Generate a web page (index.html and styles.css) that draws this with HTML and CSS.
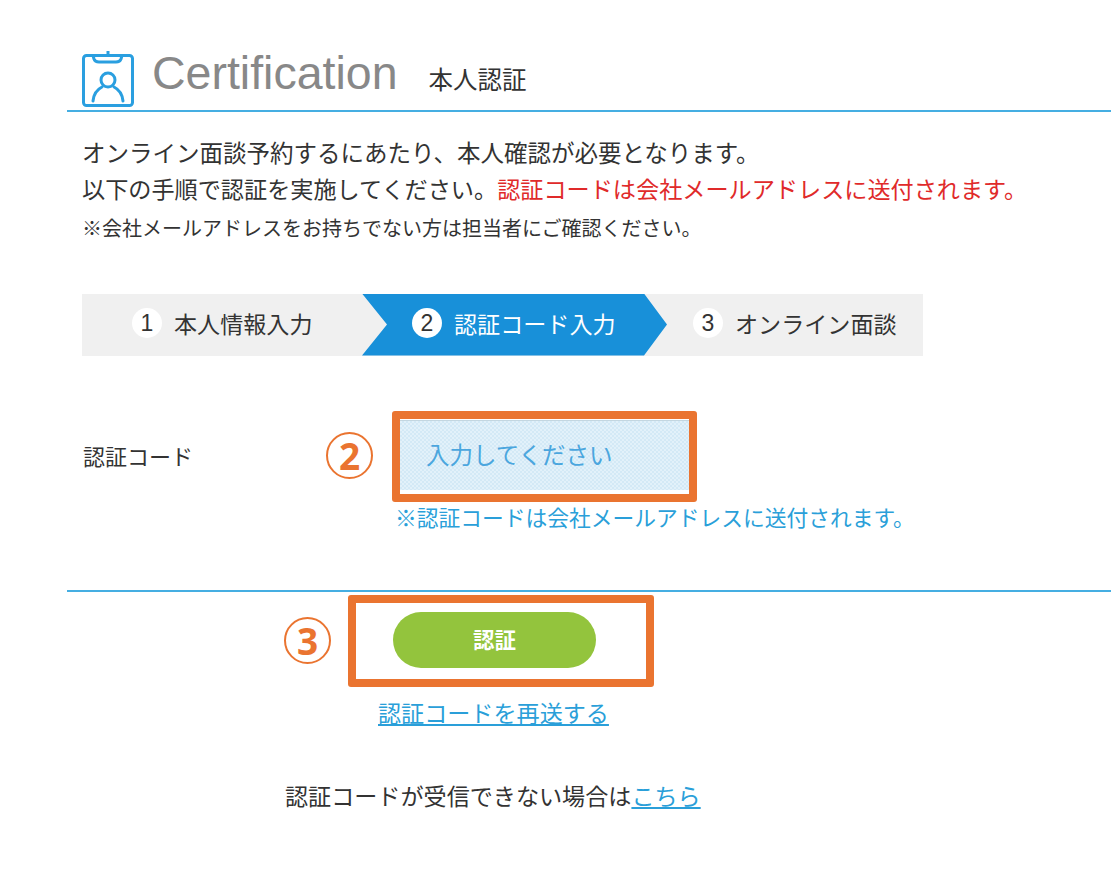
FILE: index.html
```html
<!DOCTYPE html>
<html lang="ja">
    <head>
        <meta charset="UTF-8" />
        <title>Certification 本人認証</title>
        <link rel="stylesheet" href="styles.css">
    </head>
    <body>
        <header class="page-head">
            <svg class="head-icon" width="54" height="60" viewBox="0 0 54 60" fill="none" stroke="#2a9fe0" stroke-width="3">
                <rect x="2.500" y="6.500" width="49" height="50" rx="3" />
                <path d="M12 6.500 L13 10 Q14 13 18 13 L35 13 Q39 13 40 10 L41 6.500" />
                <path d="M27 2 L27 6" />
                <circle cx="27" cy="31" r="7" />
                <path d="M12 52 Q13 42 21 38 M42 52 Q41 42 33 38" stroke-linecap="round" />
            </svg>
            <h1 class="head-title">Certification</h1>
            <span class="head-sub">本人認証</span>
        </header>

        <section class="intro">
            <p class="lead">オンライン面談予約するにあたり、本人確認が必要となります。</p>
            <p>以下の手順で認証を実施してください。<span class="red">認証コードは会社メールアドレスに送付されます。</span></p>
            <p class="small">※会社メールアドレスをお持ちでない方は担当者にご確認ください。</p>
        </section>

        <ol class="steps">
            <li class="step step-first"><span class="num">1</span>本人情報入力</li>
            <li class="step step-active"><span class="num">2</span>認証コード入力</li>
            <li class="step step-last"><span class="num">3</span>オンライン面談</li>
        </ol>

        <form class="code-form">
            <label class="code-label" for="code">認証コード</label>
            <div class="code-field">
                <span class="mark mark-two">2</span>
                <input id="code" class="code-input" type="text" placeholder="入力してください" />
                <span class="frame frame-input"></span>
                <p class="code-note">※認証コードは会社メールアドレスに送付されます。</p>
            </div>
        </form>

        <div class="actions">
            <div class="submit-wrap">
                <span class="mark mark-three">3</span>
                <button class="submit-btn" type="button">認証</button>
                <span class="frame frame-btn"></span>
            </div>
            <p class="resend"><a href="#">認証コードを再送する</a></p>
            <p class="help">認証コードが受信できない場合は<a href="#">こちら</a></p>
        </div>
    </body>
</html>
```

FILE: styles.css
```css
* {
    box-sizing: border-box;
}
body {
    margin: 0;
    background: #fff;
    color: #333;
    font-family: "Liberation Sans", "Noto Sans CJK JP", sans-serif;
    overflow: hidden;
}
p {
    margin: 0;
}
a {
    color: #2a9fd9;
}

.page-head {
    display: flex;
    align-items: flex-start;
    height: 112px;
    margin-left: 67px;
    padding: 49px 0 0 14px;
    border-bottom: 2px solid #45aee2;
}
.head-icon {
    flex: none;
}
.head-title {
    margin: -3px 0 0 17px;
    font-size: 46.500px;
    line-height: 54px;
    font-weight: normal;
    color: #888;
}
.head-sub {
    margin: 14px 0 0 31px;
    font-size: 24.500px;
    line-height: 36px;
}

.intro {
    margin: 24px 0 0 82px;
    font-size: 23.150px;
    line-height: 36px;
}
.intro .lead {
    font-size: 23.500px;
}
.intro .small {
    margin-top: 3px;
    font-size: 20px;
}
.red {
    color: #e02a2a;
}

.steps {
    display: flex;
    width: 841px;
    height: 62px;
    margin: 46.500px 0 0 82px;
    padding: 0;
    list-style: none;
    background: #f0f0f0;
    font-size: 23.100px;
}
.step {
    display: flex;
    align-items: center;
    padding-bottom: 3px;
}
.step-first {
    width: 280px;
    padding-left: 50px;
}
.step-active {
    width: 305px;
    padding-left: 50px;
    background: #1890d9;
    color: #fff;
    clip-path: polygon(0 0, 282px 0, 100% 50%, 282px 100%, 0 100%, 25px 50%);
}
.step-last {
    padding-left: 26px;
}
.num {
    display: flex;
    align-items: center;
    justify-content: center;
    width: 30px;
    height: 30px;
    margin-right: 12px;
    border-radius: 50%;
    background: #fff;
    color: #333;
    font-size: 23px;
}

.code-form {
    display: flex;
    margin: 64px 0 0 83px;
    height: 170px;
}
.code-label {
    width: 317px;
    padding-top: 21px;
    font-size: 22px;
    line-height: 34px;
}
.code-field {
    position: relative;
    width: 289px;
}
.code-input {
    display: block;
    width: 289px;
    height: 74px;
    padding: 2px 0 0 26px;
    border: none;
    border-top: 1px solid #c3d6e0;
    border-bottom: 4px solid #fff;
    border-radius: 0;
    outline: none;
    background: repeating-conic-gradient(#d3e9f6 0 25%, #e2f1fa 0 50%) 0 0 / 4px 4px;
    font-family: inherit;
    font-size: 23.500px;
}
.code-input::placeholder {
    color: #4ba6de;
    opacity: 1;
}
.code-note {
    margin: 9px 0 0 -5px;
    width: 560px;
    color: #2a9fd9;
    font-size: 21.750px;
    line-height: 32px;
}

.frame {
    position: absolute;
    border: 8px solid #ea7430;
    border-radius: 3px;
}
.frame-input {
    left: -8px;
    top: -9px;
    width: 305px;
    height: 91px;
}
.frame-btn {
    left: -45px;
    top: -17px;
    width: 306px;
    height: 92px;
}
.mark {
    position: absolute;
    display: flex;
    align-items: center;
    justify-content: center;
    width: 47px;
    height: 47px;
    border: 2.500px solid #ea7430;
    border-radius: 50%;
    color: #ea7430;
    font-size: 37px;
    font-weight: bold;
    font-family: "Open Sans", sans-serif;
}
.mark-two {
    left: -74px;
    top: 12px;
}
.mark-three {
    left: -109px;
    top: 5px;
}

.actions {
    margin-left: 67px;
    padding: 20px 0 0 326px;
    border-top: 2px solid #45aee2;
}
.submit-wrap {
    position: relative;
    width: 203px;
}
.submit-btn {
    display: block;
    width: 203px;
    height: 56px;
    padding: 0 0 3px;
    border: none;
    border-radius: 28px;
    background: #93c43d;
    color: #fff;
    font-family: inherit;
    font-size: 21.500px;
    font-weight: bold;
}
.resend {
    width: 320px;
    margin: 28px 0 0 -15px;
    font-size: 23.100px;
    line-height: 36px;
}
.help {
    width: 500px;
    margin: 47px 0 0 -108px;
    font-size: 23.100px;
    line-height: 36px;
}
```
